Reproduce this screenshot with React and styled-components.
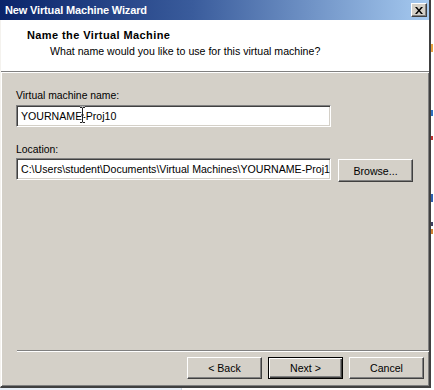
import React from 'react';
import styled, { createGlobalStyle } from 'styled-components';

const Global = createGlobalStyle`
  html, body {
    margin: 0;
    padding: 0;
    background: #ffffff;
    overflow: hidden;
  }
  body {
    font-family: "Liberation Sans", Arial, sans-serif;
    font-size: 11px;
    color: #000;
  }
`;

const Screen = styled.div`
  width: 434px;
  height: 390px;
  display: flex;
  flex-direction: column;
`;

const Top = styled.div`
  display: flex;
`;

const Window = styled.div`
  width: 431px;
  height: 388px;
  box-sizing: border-box;
  display: flex;
  flex-direction: column;
  background: #d4d0c8;
  border-left: 1px solid #f4f2ee;
  border-right: 2px solid #404040;
  border-bottom: 2px solid #404040;
  box-shadow: inset 1px 0 0 #ffffff, inset -1px -1px 0 #808080;
`;

const TitleBar = styled.div`
  height: 20px;
  flex: none;
  display: flex;
  align-items: center;
  justify-content: space-between;
  padding: 0 2px 0 5px;
  margin-left: -1px;
  background: linear-gradient(to right, #0a246a 0%, #3a5c9c 45%, #a6caf0 100%);
`;

const Title = styled.span`
  color: #ffffff;
  font-weight: bold;
  font-size: 11px;
  letter-spacing: -0.15px;
`;

const CloseButton = styled.div`
  width: 16px;
  height: 14px;
  box-sizing: border-box;
  background: #d4d0c8;
  border: 1px solid;
  border-color: #ffffff #404040 #404040 #ffffff;
  box-shadow: inset -1px -1px 0 #808080;
  display: flex;
  align-items: center;
  justify-content: center;
`;

const Header = styled.div`
  height: 52px;
  flex: none;
  background: #ffffff;
  border-bottom: 1px solid #808080;
  box-shadow: 0 1px 0 #ffffff;
  padding: 9px 0 0 26px;
  box-sizing: border-box;
`;

const HeaderTitle = styled.div`
  font-weight: bold;
  line-height: 13px;
  letter-spacing: 0.4px;
`;

const HeaderSub = styled.div`
  line-height: 13px;
  margin: 3px 0 0 23px;
  font-size: 10.6px;
`;

const Body = styled.div`
  flex: 1;
  display: flex;
  flex-direction: column;
  padding: 16px 0 0 15px;
  margin-top: 1px;
`;

const Label = styled.div`
  line-height: 13px;
  font-size: 10.4px;
  margin-top: ${p => p.$gap || 0}px;
`;

const FieldRow = styled.div`
  display: flex;
  align-items: flex-start;
  gap: 7px;
  margin-top: ${p => p.$gap || 0}px;
`;

const Field = styled.div`
  position: relative;
  width: 315px;
  height: 22px;
  box-sizing: border-box;
  background: #ffffff;
  border: 1px solid;
  border-color: #808080 #ffffff #ffffff #808080;
  box-shadow: inset 1px 1px 0 #404040, inset -1px -1px 0 #d4d0c8;
  padding: 0 4px;
  display: flex;
  align-items: center;
  overflow: hidden;
  white-space: nowrap;
  font-size: 10.6px;
`;

const Cursor = styled.svg`
  position: absolute;
  left: 62px;
  top: 0px;
`;

const Button = styled.div`
  width: 75px;
  height: ${p => p.$h || 22}px;
  box-sizing: border-box;
  display: flex;
  align-items: center;
  justify-content: center;
  background: #d4d0c8;
  font-size: 10.6px;
  border: 1px solid;
  border-color: ${p => (p.$default ? '#000 #000 #000 #000' : '#ffffff #404040 #404040 #ffffff')};
  box-shadow: ${p =>
    p.$default
      ? 'inset 1px 1px 0 #ffffff, inset -1px -1px 0 #404040, inset -2px -2px 0 #808080'
      : 'inset -1px -1px 0 #808080'};
  margin-top: ${p => p.$offset || 0}px;
`;

const Spacer = styled.div`
  flex: 1;
`;

const Separator = styled.div`
  height: 1px;
  background: #808080;
  border-bottom: 1px solid #ffffff;
  margin: 0 0 5px 1px;
`;

const Footer = styled.div`
  display: flex;
  justify-content: flex-end;
  gap: 6px;
  padding: 0 5px 7px 0;
`;

const Side = styled.div`
  flex: 1;
  display: flex;
  flex-direction: column;
  align-items: flex-start;
`;

const Mark = styled.div`
  width: ${p => p.$w || 2}px;
  height: ${p => p.$h || 3}px;
  background: ${p => p.$c};
  margin-top: ${p => p.$top}px;
`;

const Desktop = styled.div`
  flex: 1;
  display: flex;
`;

const Taskbit = styled.div`
  width: 181px;
  background: #e6eef7;
  border-right: 1px solid #cfd8e2;
`;

export default function App() {
  return (
    <Screen>
      <Global />
      <Top>
        <Window>
          <TitleBar>
            <Title>New Virtual Machine Wizard</Title>
            <CloseButton>
              <svg width="8" height="7" viewBox="0 0 8 7">
                <path d="M0 0h2l2 2.5L6 0h2L5 3.5 8 7H6L4 4.5 2 7H0l3-3.5z" fill="#000" />
              </svg>
            </CloseButton>
          </TitleBar>
          <Header>
            <HeaderTitle>Name the Virtual Machine</HeaderTitle>
            <HeaderSub>What name would you like to use for this virtual machine?</HeaderSub>
          </Header>
          <Body>
            <Label>Virtual machine name:</Label>
            <FieldRow $gap={3}>
              <Field>
                YOURNAME-Proj10
                <Cursor width="7" height="18" viewBox="0 0 7 18">
                  <path d="M1 1.5h2l.5.5.5-.5h2M3.5 2v14M1 16.5h2l.5-.5.5.5h2M2 9h3" stroke="#fff" strokeWidth="2" fill="none" />
                  <path d="M1 1.5h2l.5.5.5-.5h2M3.5 2v14M1 16.5h2l.5-.5.5.5h2M2 9h3" stroke="#222" strokeWidth="1" fill="none" />
                </Cursor>
              </Field>
            </FieldRow>
            <Label $gap={16}>Location:</Label>
            <FieldRow $gap={2}>
              <Field>C:\Users\student\Documents\Virtual Machines\YOURNAME-Proj10</Field>
              <Button $h={23} $offset={1}>Browse...</Button>
            </FieldRow>
            <Spacer />
            <Separator />
            <Footer>
              <Button>&lt; Back</Button>
              <Button $default>Next &gt;</Button>
              <Button>Cancel</Button>
            </Footer>
          </Body>
        </Window>
        <Side>
          <Mark $c="#e8a040" $top={44} $w={2} $h={8} />
          <Mark $c="#3070c0" $top={58} $w={2} $h={6} />
          <Mark $c="#c03030" $top={20} $w={2} $h={4} />
          <Mark $c="#3060b0" $top={54} $w={2} $h={8} />
          <Mark $c="#404060" $top={20} $w={2} $h={4} />
          <Mark $c="#d08030" $top={3} $w={2} $h={5} />
        </Side>
      </Top>
      <Desktop>
        <Taskbit />
      </Desktop>
    </Screen>
  );
}
